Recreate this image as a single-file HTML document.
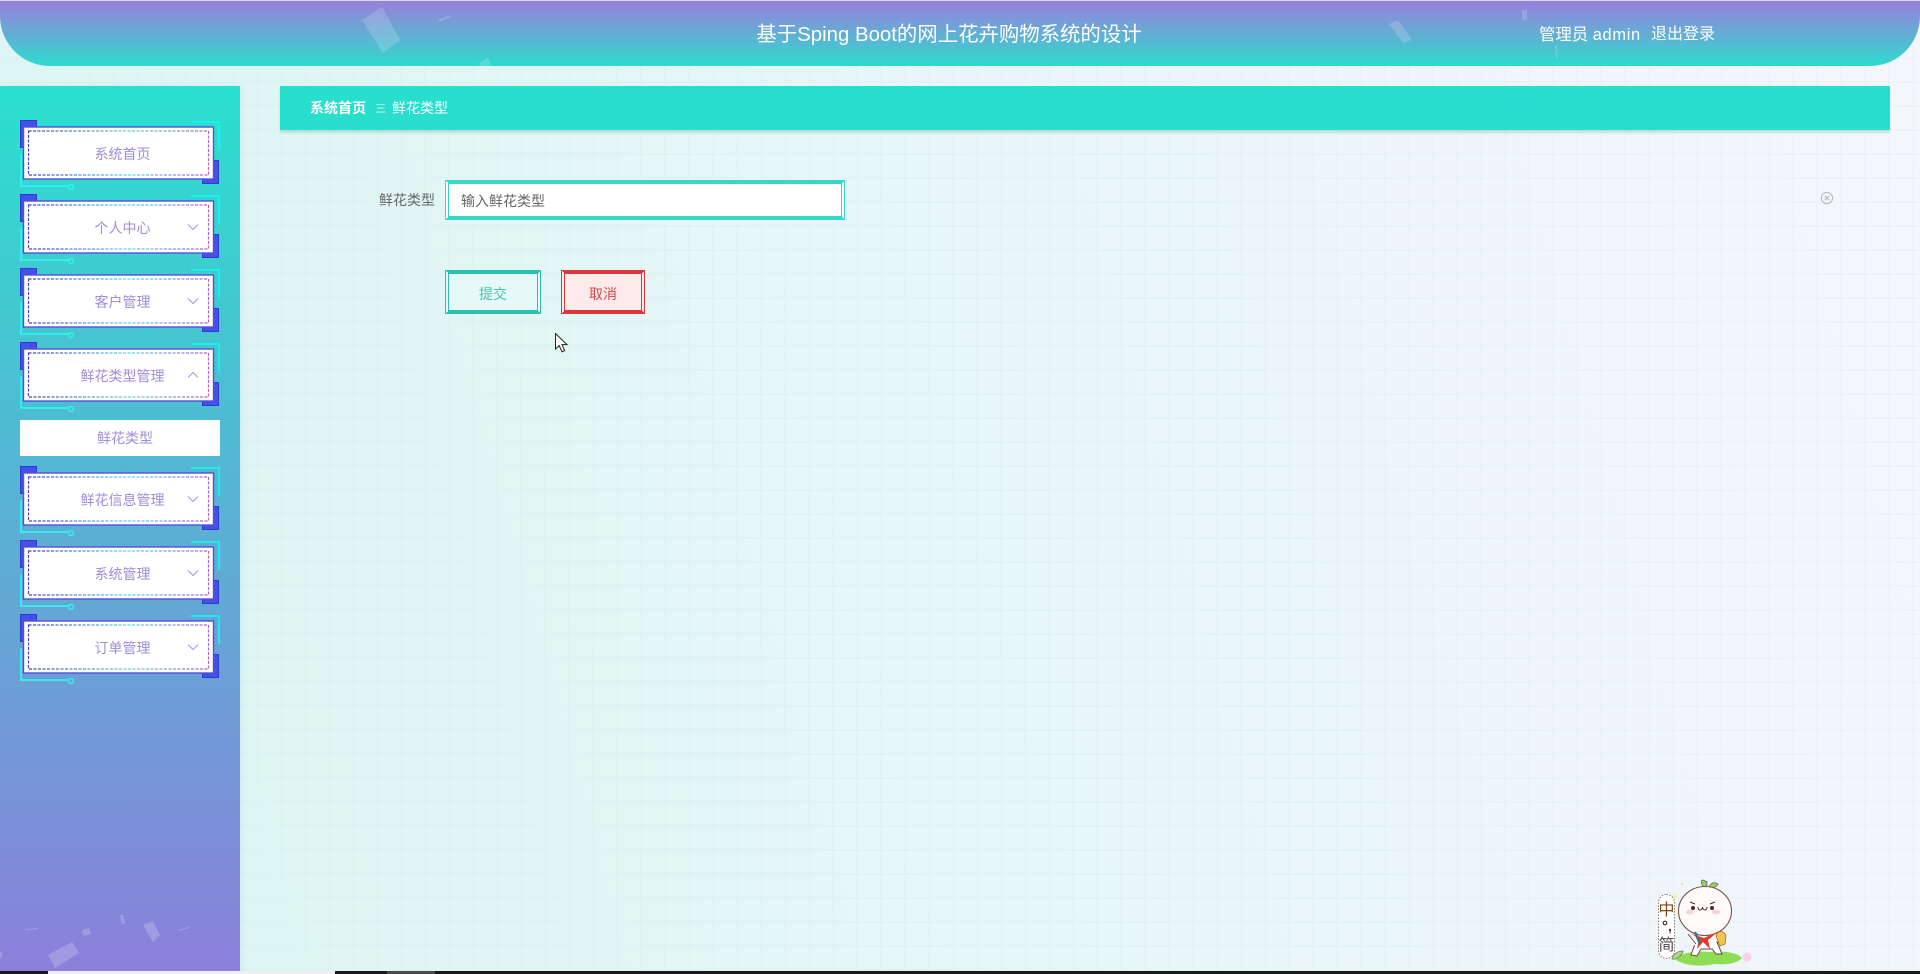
<!DOCTYPE html>
<html lang="zh">
<head>
<meta charset="utf-8">
<title>鲜花类型</title>
<style>
html,body{margin:0;padding:0;width:1920px;height:974px;overflow:hidden}
body{position:relative;font-family:"Liberation Sans","Noto Sans CJK SC",sans-serif;font-size:14px;background:#e6f6f7}
.abs{position:absolute}
#bg{left:0;top:0;width:1920px;height:971px;background:
 repeating-linear-gradient(90deg,rgba(196,224,232,.1) 0,rgba(196,224,232,.1) 2px,transparent 2px,transparent 24px) 16px 0,
 repeating-linear-gradient(0deg,rgba(196,224,232,.12) 0,rgba(196,224,232,.12) 2px,transparent 2px,transparent 24px),
 linear-gradient(75deg,#dcf6f2 0%,#e3f6f5 38%,#ecf6f9 68%,#f5f6fd 100%)}
#hd{left:0;top:1px;width:1920px;height:65px;background:linear-gradient(180deg,#9a7fdb 0%,#2ddbce 100%);border-radius:0 0 50px 50px;overflow:hidden}
#top{left:0;top:0;width:1920px;height:1px;background:#dcd8ee}
#ttl{left:700px;top:21px;width:498px;text-align:center;color:#fff;font-size:20.4px;line-height:28px;white-space:nowrap}
.usr{top:24px;color:#fff;line-height:22px;white-space:nowrap}
#sd{left:0;top:86px;width:240px;height:885px;background:linear-gradient(180deg,#2ae0ce 0%,#8b80da 100%);box-shadow:2px 0 6px rgba(150,190,190,.2)}
#bc{left:280px;top:86px;width:1610px;height:44px;background:#2adecd;box-shadow:0 3px 2px rgba(120,195,180,.4)}
.bt{top:98px;color:#fff;font-size:14px;line-height:20px;white-space:nowrap}
.m{left:0;width:240px;text-align:center;color:#a08cd8;font-size:14px;line-height:20px;white-space:nowrap;padding-left:5px;box-sizing:border-box}
.fr{left:0;width:240px;height:70px}
#sub{left:20px;top:420px;width:200px;height:36px;background:#fff;color:#a08cd8;text-align:center;line-height:36px;padding-left:10px;box-sizing:border-box}
#lab{left:379px;top:190px;color:#666;line-height:20px;white-space:nowrap}
#inp{left:445px;top:180px;width:400px;height:40px;box-sizing:border-box;background:#fff;border-style:solid double;border-width:4px;border-color:#36d8c8;color:#666;line-height:34px;padding-left:12px;white-space:nowrap}
.btn{top:270px;height:44px;box-sizing:border-box;border-style:solid double;border-width:4px;text-align:center;line-height:40px;white-space:nowrap}
#ok{left:445px;width:96px;border-color:#2cc0ae;background:#e6f9f6;color:#46c4ab}
#no{left:561px;width:84px;border-color:#d9363e;background:#fdeaea;color:#d8474c}
#bar{left:0;top:971px;width:1920px;height:3px;background:#1a1a1a}
</style>
</head>
<body>
<div id="bg" class="abs"></div>

<div id="hd" class="abs"></div>
<div id="top" class="abs"></div>
<svg class="abs" style="left:0;top:0" width="1920" height="66">
 <g fill="#fff" fill-opacity=".17">
  <polygon points="362,20 382,7 400,40 383,53"/>
  <polygon points="438,20 450,15 451,17 439,22"/>
  <polygon points="478,64 488,58 492,66 482,66"/>
  <polygon points="1389,24 1398,20 1412,40 1403,43"/>
  <polygon points="1522,10 1527,10 1527,20 1522,20"/>
  <polygon points="1555,45 1557,45 1558,58 1556,58"/>
 </g>
</svg>
<div id="ttl" class="abs">基于Sping Boot的网上花卉购物系统的设计</div>
<div class="abs usr" style="left:1539px;font-size:16.4px">管理员 <span style="letter-spacing:.7px">admin</span></div>
<div class="abs usr" style="left:1651px;font-size:16px">退出登录</div>

<div id="sd" class="abs"></div>
<svg class="abs" style="left:0;top:900px" width="240" height="71">
 <g fill="#fff" fill-opacity=".2">
  <polygon points="48,55 72,42 79,53 55,68"/>
  <polygon points="143,25 153,21 160,35 153,42"/>
  <polygon points="82,30 89,28 91,34 83,36"/>
  <polygon points="120,15 123,15 125,23 122,24"/>
  <polygon points="25,29 38,28 38,29 25,30"/>
  <polygon points="178,30 190,27 190,28 178,31"/>
  <polygon points="0,52 2,52 2,58 0,58"/>
 </g>
</svg>

<svg width="0" height="0" style="position:absolute">
 <defs>
  <linearGradient id="dg" x1="0" x2="1" y1="0" y2="0">
   <stop offset="0" stop-color="#4a3fb8"/>
   <stop offset=".55" stop-color="#5fd6e6"/>
   <stop offset="1" stop-color="#b060c8"/>
  </linearGradient>
  <symbol id="frame" viewBox="0 0 240 70" width="240" height="70">
   <rect x="20.5" y="0.5" width="16" height="27" fill="#4450ea" stroke="#2f3cc8"/>
   <rect x="202.5" y="40.5" width="16" height="23" fill="#4450ea" stroke="#2f3cc8"/>
   <path d="M191 2H219V30" fill="none" stroke="#16f4f2" stroke-width="1.7"/>
   <path d="M21 34V66H68" fill="none" stroke="#30f4f2" stroke-width="1.7"/>
   <circle cx="71" cy="67" r="2.4" fill="none" stroke="#30f4f2" stroke-width="1.4"/>
   <rect x="23.5" y="7" width="190" height="52" fill="#fff" stroke="#5350d8" stroke-width="1.4"/>
   <rect x="28.5" y="11" width="180" height="44" fill="none" stroke="url(#dg)" stroke-width="1.2" stroke-dasharray="3 1.5"/>
  </symbol>
 </defs>
</svg>

<svg class="abs fr" style="top:120px"><use href="#frame"/></svg>
<svg class="abs fr" style="top:194px"><use href="#frame"/></svg>
<svg class="abs fr" style="top:268px"><use href="#frame"/></svg>
<svg class="abs fr" style="top:342px"><use href="#frame"/></svg>
<svg class="abs fr" style="top:466px"><use href="#frame"/></svg>
<svg class="abs fr" style="top:540px"><use href="#frame"/></svg>
<svg class="abs fr" style="top:614px"><use href="#frame"/></svg>

<div class="abs m" style="top:144px">系统首页</div>
<div class="abs m" style="top:218px">个人中心</div>
<div class="abs m" style="top:292px">客户管理</div>
<div class="abs m" style="top:366px">鲜花类型管理</div>
<div class="abs m" style="top:490px">鲜花信息管理</div>
<div class="abs m" style="top:564px">系统管理</div>
<div class="abs m" style="top:638px">订单管理</div>

<svg class="abs" style="left:0;top:0" width="240" height="700">
 <g fill="none" stroke="#a99ae0" stroke-width="1.1">
  <path d="M188 224.5L193 229.5L198 224.5"/>
  <path d="M188 298.5L193 303.5L198 298.5"/>
  <path d="M188 377.5L193 372.5L198 377.5"/>
  <path d="M188 496.5L193 501.5L198 496.5"/>
  <path d="M188 570.5L193 575.5L198 570.5"/>
  <path d="M188 644.5L193 649.5L198 644.5"/>
 </g>
</svg>

<div id="sub" class="abs">鲜花类型</div>

<div id="bc" class="abs"></div>
<div class="abs bt" style="left:310px;font-weight:bold">系统首页</div>
<div class="abs bt" style="left:375px;top:99px;font-size:11px;opacity:.8">三</div>
<div class="abs bt" style="left:392px">鲜花类型</div>

<div id="lab" class="abs">鲜花类型</div>
<div id="inp" class="abs">输入鲜花类型</div>
<svg class="abs" style="left:1820px;top:191px" width="14" height="14" viewBox="0 0 14 14">
 <circle cx="7" cy="7" r="5.6" fill="none" stroke="#b5bcc0" stroke-width="1.1"/>
 <path d="M4.8 4.8L9.2 9.2M9.2 4.8L4.8 9.2" stroke="#b5bcc0" stroke-width="1.1"/>
</svg>

<div id="ok" class="abs btn">提交</div>
<div id="no" class="abs btn">取消</div>

<svg class="abs" style="left:555px;top:333px" width="14" height="20" viewBox="0 0 14 20">
 <path d="M.5 .5V16L4.2 12.6L7 18.8L9.6 17.6L7 11.6H12Z" fill="#fff" stroke="#222" stroke-width="1"/>
</svg>

<!-- mascot -->
<svg class="abs" style="left:1640px;top:870px" width="120" height="101" viewBox="0 0 120 101">
 <path d="M36 90C40 82 56 81 70 82C86 80 100 84 102 88C96 94 86 95 74 94C62 97 46 96 36 90Z" fill="#8fdc55"/>
 <circle cx="107" cy="87" r="4.5" fill="#f8d2e2"/>
 <path d="M67 22C66 18 66 14 67 11" fill="none" stroke="#7a5540" stroke-width="1"/>
 <path d="M66 18C61 16 60 10 63 10C67 11 68 14 66 18Z" fill="#8fce72" stroke="#6a6a40" stroke-width=".8"/>
 <path d="M69 17C71 12 76 12 78 14C76 18 72 19 69 17Z" fill="#8fce72" stroke="#6a6a40" stroke-width=".8"/>
 <path d="M55 74L51 85L57 86L61 79H72L76 84L82 84L77 72Z" fill="#fff" stroke="#6b4a3c" stroke-width="1"/>
 <path d="M52 64C50 72 54 78 64 78C74 78 79 72 78 62Z" fill="#fff"/>
 <path d="M48 64L56 74M80 62L78 73" stroke="#6b4a3c" stroke-width="1"/>
 <ellipse cx="65" cy="41" rx="26.5" ry="24.5" fill="#fffafa" stroke="#7a5548" stroke-width="1.1"/>
 <ellipse cx="50" cy="42" rx="4" ry="2.4" fill="#fcd0d6"/>
 <ellipse cx="76" cy="42" rx="4" ry="2.4" fill="#fcd0d6"/>
 <circle cx="53" cy="38" r="2" fill="#4a2a28"/>
 <circle cx="72" cy="38" r="2" fill="#4a2a28"/>
 <path d="M50 32L55 34M75 32L70 34" stroke="#4a2a28" stroke-width="1"/>
 <path d="M58 37C58 41 62 41 62.5 37C63 41 67 41 67 37" fill="none" stroke="#4a2a28" stroke-width="1"/>
 <path d="M52 64L64 68L79 61L68 70L70 79L63 72L57 79L59 69Z" fill="#e5382c"/>
 <path d="M55 62L60 74" stroke="#4a6a80" stroke-width="2.4"/>
 <path d="M76 66C78 60 84 60 86 66L85 74L80 76Z" fill="#f2c452" stroke="#a8752c" stroke-width=".8"/>
 <circle cx="35" cy="26" r="2.2" fill="#f3f2a8"/>
 <circle cx="42" cy="14" r="1.2" fill="#f6e08a"/>
 <path d="M32 89C37 90 42 86 43 81C38 81 33 84 32 89Z" fill="#a7d88a" stroke="#6a7a50" stroke-width=".7"/>
 <rect x="18.5" y="24.5" width="16" height="64" rx="8" fill="#fff" stroke="#8a7a6a" stroke-width="1" stroke-dasharray="1.5 1.5"/>
 <text x="26.5" y="45" text-anchor="middle" font-size="16" fill="#7a4a10" font-family="'Noto Sans CJK SC',sans-serif">中</text>
 <circle cx="25" cy="53" r="1.8" fill="none" stroke="#4a3a20" stroke-width="1.2"/>
 <text x="30" y="61" text-anchor="middle" font-size="14" font-weight="bold" fill="#4a3a20" font-family="'Liberation Sans',sans-serif">,</text>
 <text x="26.5" y="80" text-anchor="middle" font-size="16" fill="#4a4a4a" font-family="'Noto Sans CJK SC',sans-serif">简</text>
</svg>

<div id="bar" class="abs"></div>
<div class="abs" style="left:48px;top:971px;width:287px;height:3px;background:#f0f0f0"></div>
<div class="abs" style="left:387px;top:971px;width:48px;height:3px;background:#4a4a4a"></div>
</body>
</html>
